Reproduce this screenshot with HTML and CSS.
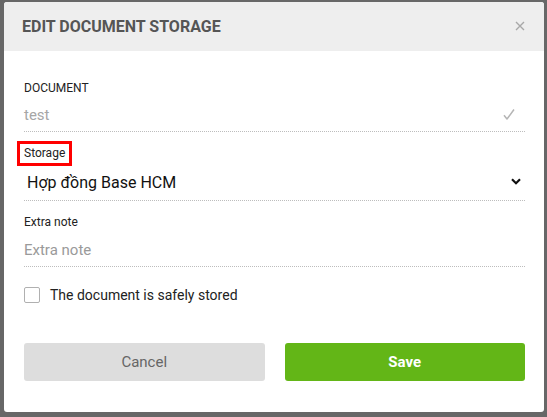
FILE: index.html
```html
<!DOCTYPE html>
<html>
<head>
<meta charset="utf-8">
<link rel="stylesheet" href="styles.css">
</head>
<body>
<div class="modal">
  <div class="modal-header">
    <h1 class="modal-title">EDIT DOCUMENT STORAGE</h1>
    <span class="close-btn">
      <svg width="10" height="10" viewBox="0 0 10 10"><path d="M1 1L9 9M9 1L1 9" stroke="#a8a8a8" stroke-width="1.4" fill="none"/></svg>
    </span>
  </div>
  <div class="modal-body">
    <div class="field">
      <div class="label upper">DOCUMENT</div>
      <div class="control readonly">
        <span>test</span>
        <svg class="check" width="12" height="11" viewBox="0 0 12 11"><path d="M1 6.2L4 10L11 0.5" stroke="#b5b5b5" stroke-width="1.5" fill="none" stroke-linejoin="round"/></svg>
      </div>
    </div>
    <div class="field">
      <div class="label"><span class="highlight">Storage</span></div>
      <div class="control select">
        <span>Hợp đồng Base HCM</span>
        <svg class="chevron" width="10" height="7" viewBox="0 0 10 7"><path d="M1 1.2L5 5.2L9 1.2" stroke="#111" stroke-width="2.2" fill="none"/></svg>
      </div>
    </div>
    <div class="field">
      <div class="label">Extra note</div>
      <div class="control placeholder tall">
        <span>Extra note</span>
      </div>
    </div>
    <label class="checkbox-row">
      <span class="checkbox"></span>
      <span class="checkbox-text">The document is safely stored</span>
    </label>
    <div class="actions">
      <button class="btn btn-cancel">Cancel</button>
      <button class="btn btn-save">Save</button>
    </div>
  </div>
</div>
</body>
</html>
```

FILE: styles.css
```css
html, body {
  margin: 0;
  padding: 0;
}
body {
  background: #676767;
  font-family: Roboto, "Liberation Sans", Arial, sans-serif;
  width: 547px;
  height: 417px;
  overflow: hidden;
}
.modal {
  margin: 2px 0 0 4px;
  width: 540px;
  height: 410px;
  background: #fff;
  border-radius: 3px;
  overflow: hidden;
  display: flex;
  flex-direction: column;
}
.modal-header {
  height: 49px;
  flex: none;
  background: #eeeeee;
  display: flex;
  align-items: center;
  justify-content: space-between;
  padding: 0 19px 0 18px;
}
.modal-title {
  margin: 0;
  font-size: 16px;
  font-weight: 700;
  color: #555;
  line-height: normal;
}
.close-btn {
  display: flex;
  width: 10px;
  height: 10px;
  margin-top: -1px;
}
.modal-body {
  padding: 30px 19px 30px 20px;
  display: flex;
  flex-direction: column;
}
.field {
  display: flex;
  flex-direction: column;
}
.field + .field {
  margin-top: 14px;
}
.label {
  font-size: 12px;
  line-height: 14px;
  font-weight: 400;
  color: #222;
}
.highlight {
  position: relative;
}
.highlight::after {
  content: "";
  position: absolute;
  left: -7px;
  right: -7px;
  top: -5px;
  bottom: -6px;
  border: 3px solid #f00;
}
.control {
  display: flex;
  align-items: center;
  justify-content: space-between;
  border-bottom: 1px dotted #bdbdbd;
  padding-top: 4px;
  height: 32px;
  line-height: 32px;
  font-size: 15px;
}
.readonly {
  color: #a6a6a6;
}
.check {
  margin-right: 10px;
  margin-top: -2px;
}
.select {
  padding-top: 6px;
  height: 34px;
  line-height: 34px;
  font-size: 16px;
  color: #111;
  padding-left: 3px;
}
.chevron {
  margin-right: 4px;
  margin-top: -3px;
}
.placeholder {
  color: #9a9a9a;
}
.tall {
  height: 33px;
}
.checkbox-row {
  margin-top: 20px;
  display: flex;
  align-items: center;
  gap: 10px;
  height: 16px;
}
.checkbox {
  width: 14px;
  height: 14px;
  border: 1px solid #b0b0b0;
  border-radius: 2px;
  flex: none;
}
.checkbox-text {
  font-size: 14px;
  color: #222;
}
.actions {
  margin-top: 40px;
  display: grid;
  grid-template-columns: 1fr 1fr;
  gap: 20px;
}
.btn {
  height: 38px;
  border: none;
  border-radius: 3px;
  font-family: Roboto, "Liberation Sans", Arial, sans-serif;
  font-size: 15px;
  padding: 0;
}
.btn-cancel {
  background: #dddddd;
  color: #666;
}
.btn-save {
  background: #63b617;
  color: #fff;
  font-weight: 700;
}
```
